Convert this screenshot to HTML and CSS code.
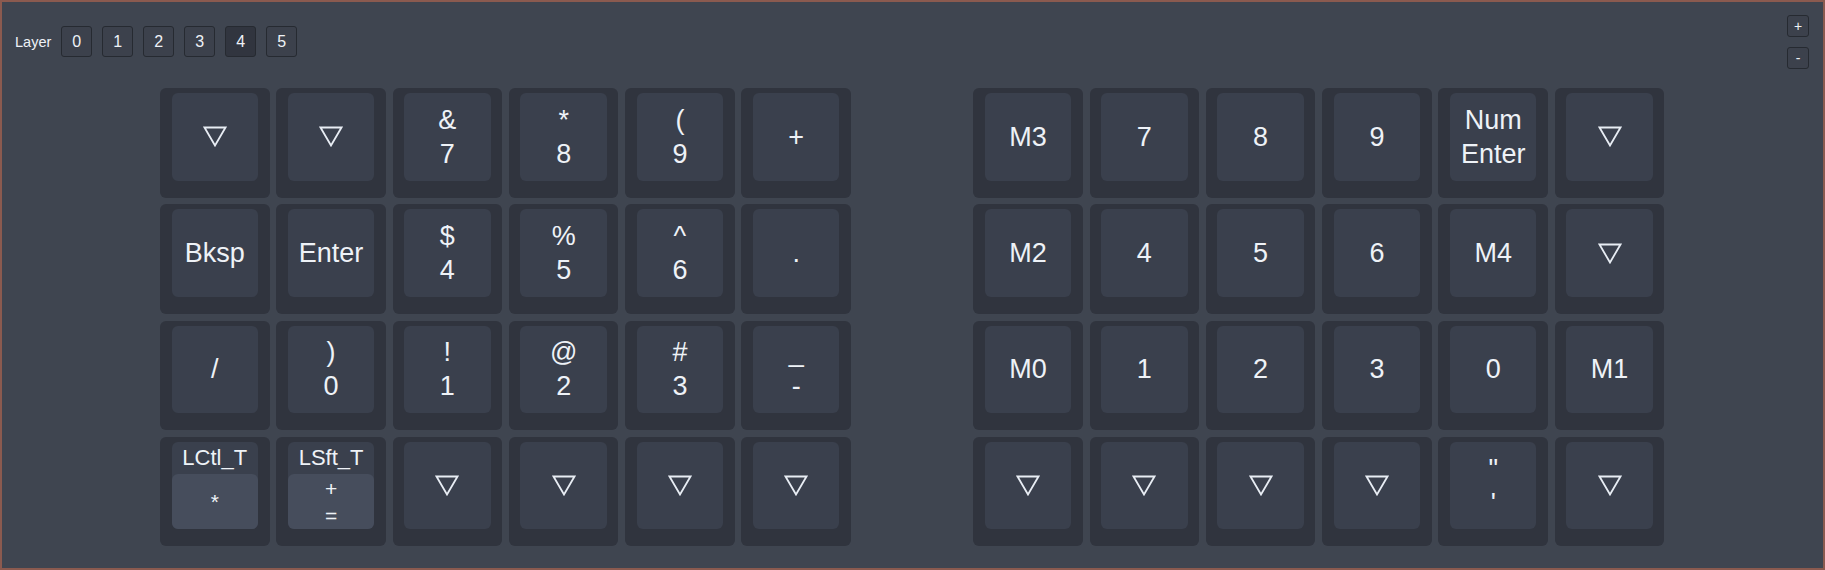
FILE: index.html
```html
<!DOCTYPE html>
<html lang="en">
<head>
    <meta charset="UTF-8">
    <title>Keymap</title>
    <link rel="stylesheet" href="styles.css">
</head>
<body>
<div class="frame">
    <div class="toolbar">
        <div class="layers">
            <span class="layers-label">Layer</span>
            <button class="layer-btn">0</button>
            <button class="layer-btn">1</button>
            <button class="layer-btn">2</button>
            <button class="layer-btn">3</button>
            <button class="layer-btn active">4</button>
            <button class="layer-btn">5</button>
        </div>
        <div class="zoom">
            <button class="zoom-btn">+</button>
            <button class="zoom-btn">-</button>
        </div>
    </div>
    <div class="board">
        <!-- left half -->
        <div class="half">
            <div class="key"><div class="cap"><svg class="tri" viewBox="0 0 24 21"><polygon points="1.5,1.5 22.5,1.5 12,19.5"/></svg></div></div>
            <div class="key"><div class="cap"><svg class="tri" viewBox="0 0 24 21"><polygon points="1.5,1.5 22.5,1.5 12,19.5"/></svg></div></div>
            <div class="key"><div class="cap"><span>&amp;</span><span>7</span></div></div>
            <div class="key"><div class="cap"><span>*</span><span>8</span></div></div>
            <div class="key"><div class="cap"><span>(</span><span>9</span></div></div>
            <div class="key"><div class="cap"><span>+</span></div></div>

            <div class="key"><div class="cap"><span>Bksp</span></div></div>
            <div class="key"><div class="cap"><span>Enter</span></div></div>
            <div class="key"><div class="cap"><span>$</span><span>4</span></div></div>
            <div class="key"><div class="cap"><span>%</span><span>5</span></div></div>
            <div class="key"><div class="cap"><span>^</span><span>6</span></div></div>
            <div class="key"><div class="cap"><span>.</span></div></div>

            <div class="key"><div class="cap"><span>/</span></div></div>
            <div class="key"><div class="cap"><span>)</span><span>0</span></div></div>
            <div class="key"><div class="cap"><span>!</span><span>1</span></div></div>
            <div class="key"><div class="cap"><span>@</span><span>2</span></div></div>
            <div class="key"><div class="cap"><span>#</span><span>3</span></div></div>
            <div class="key"><div class="cap"><span>_</span><span>-</span></div></div>

            <div class="key"><div class="cap hold"><span class="hold-name">LCtl_T</span><div class="tap"><span>*</span></div></div></div>
            <div class="key"><div class="cap hold"><span class="hold-name">LSft_T</span><div class="tap"><span>+</span><span>=</span></div></div></div>
            <div class="key"><div class="cap"><svg class="tri" viewBox="0 0 24 21"><polygon points="1.5,1.5 22.5,1.5 12,19.5"/></svg></div></div>
            <div class="key"><div class="cap"><svg class="tri" viewBox="0 0 24 21"><polygon points="1.5,1.5 22.5,1.5 12,19.5"/></svg></div></div>
            <div class="key"><div class="cap"><svg class="tri" viewBox="0 0 24 21"><polygon points="1.5,1.5 22.5,1.5 12,19.5"/></svg></div></div>
            <div class="key"><div class="cap"><svg class="tri" viewBox="0 0 24 21"><polygon points="1.5,1.5 22.5,1.5 12,19.5"/></svg></div></div>
        </div>
        <!-- right half -->
        <div class="half">
            <div class="key"><div class="cap"><span>M3</span></div></div>
            <div class="key"><div class="cap"><span>7</span></div></div>
            <div class="key"><div class="cap"><span>8</span></div></div>
            <div class="key"><div class="cap"><span>9</span></div></div>
            <div class="key"><div class="cap"><span>Num</span><span>Enter</span></div></div>
            <div class="key"><div class="cap"><svg class="tri" viewBox="0 0 24 21"><polygon points="1.5,1.5 22.5,1.5 12,19.5"/></svg></div></div>

            <div class="key"><div class="cap"><span>M2</span></div></div>
            <div class="key"><div class="cap"><span>4</span></div></div>
            <div class="key"><div class="cap"><span>5</span></div></div>
            <div class="key"><div class="cap"><span>6</span></div></div>
            <div class="key"><div class="cap"><span>M4</span></div></div>
            <div class="key"><div class="cap"><svg class="tri" viewBox="0 0 24 21"><polygon points="1.5,1.5 22.5,1.5 12,19.5"/></svg></div></div>

            <div class="key"><div class="cap"><span>M0</span></div></div>
            <div class="key"><div class="cap"><span>1</span></div></div>
            <div class="key"><div class="cap"><span>2</span></div></div>
            <div class="key"><div class="cap"><span>3</span></div></div>
            <div class="key"><div class="cap"><span>0</span></div></div>
            <div class="key"><div class="cap"><span>M1</span></div></div>

            <div class="key"><div class="cap"><svg class="tri" viewBox="0 0 24 21"><polygon points="1.5,1.5 22.5,1.5 12,19.5"/></svg></div></div>
            <div class="key"><div class="cap"><svg class="tri" viewBox="0 0 24 21"><polygon points="1.5,1.5 22.5,1.5 12,19.5"/></svg></div></div>
            <div class="key"><div class="cap"><svg class="tri" viewBox="0 0 24 21"><polygon points="1.5,1.5 22.5,1.5 12,19.5"/></svg></div></div>
            <div class="key"><div class="cap"><svg class="tri" viewBox="0 0 24 21"><polygon points="1.5,1.5 22.5,1.5 12,19.5"/></svg></div></div>
            <div class="key"><div class="cap"><span>"</span><span>'</span></div></div>
            <div class="key"><div class="cap"><svg class="tri" viewBox="0 0 24 21"><polygon points="1.5,1.5 22.5,1.5 12,19.5"/></svg></div></div>
        </div>
    </div>
</div>
</body>
</html>
```

FILE: styles.css
```css
body {
    margin: 0;
    font-family: "Liberation Sans", Arial, sans-serif;
    color: #eef2f7;
}
.frame {
    box-sizing: border-box;
    height: 570px;
    padding: 13px 14px 0 13px;
    border: 2px solid #8b5a4f;
    background-color: #3f4550;
}
.toolbar {
    display: flex;
    justify-content: space-between;
    align-items: flex-start;
}
.layers {
    display: flex;
    align-items: center;
    gap: 10px;
    margin-top: 11px;
}
.layers-label {
    font-size: 14.5px;
}
.layer-btn,
.zoom-btn {
    box-sizing: border-box;
    padding: 0;
    border: 1px solid #262a31;
    border-radius: 3px;
    background-color: #3c414c;
    color: #eef2f7;
    font-family: "Liberation Sans", Arial, sans-serif;
}
.layer-btn {
    width: 31px;
    height: 31px;
    font-size: 16px;
}
.layer-btn.active {
    background-color: #31353f;
}
.zoom {
    display: flex;
    flex-direction: column;
    gap: 10px;
}
.zoom-btn {
    width: 22px;
    height: 22px;
    font-size: 14px;
    line-height: 18px;
}
.board {
    display: flex;
    gap: 122.3px;
    margin-top: 19px;
    padding-left: 145px;
}
.half {
    display: grid;
    grid-template-columns: repeat(6, 109.5px);
    grid-auto-rows: 109.5px;
    gap: 6.8px;
}
.key {
    box-sizing: border-box;
    padding: 5px 11.5px 17px 11.5px;
    border-radius: 6px;
    background-color: #30343e;
}
.cap {
    height: 100%;
    display: flex;
    flex-direction: column;
    justify-content: center;
    align-items: center;
    border-radius: 6px;
    background-color: #3a404d;
    font-size: 27px;
    line-height: 34px;
}
.tri {
    width: 24px;
    height: 21px;
}
.tri polygon {
    fill: none;
    stroke: #e8edf4;
    stroke-width: 1.8;
}
/* hold-tap keys: name on top, tap legend on lighter block */
.cap.hold {
    justify-content: flex-start;
}
.hold-name {
    height: 32px;
    font-size: 22px;
    line-height: 32px;
}
.tap {
    flex: 1;
    align-self: stretch;
    display: flex;
    flex-direction: column;
    justify-content: center;
    align-items: center;
    border-radius: 6px;
    background-color: #464d5c;
    font-size: 21px;
    line-height: 27px;
}
```
